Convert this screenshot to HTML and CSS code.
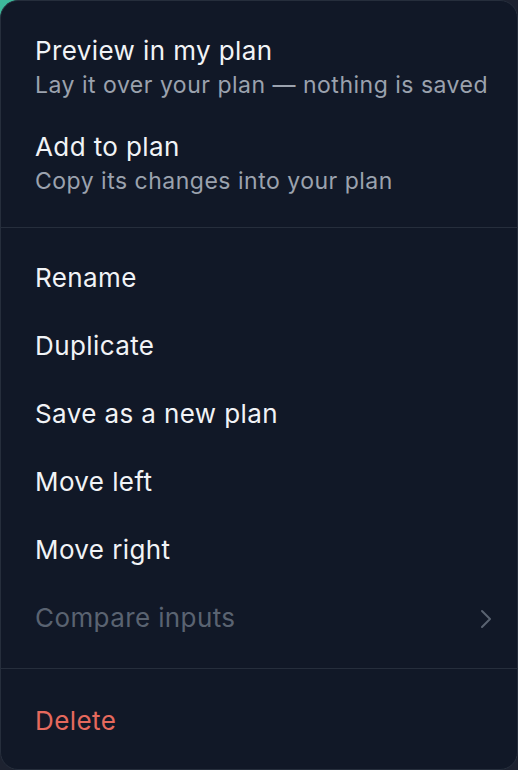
FILE: index.html
```html
<!DOCTYPE html>
<html lang="en">
<head>
<meta charset="utf-8">
<title>Plan menu</title>
<link rel="stylesheet" href="styles.css">
</head>
<body>
<div class="stage">
  <span class="avatar" aria-hidden="true"></span>
  <div class="menu" role="menu">
    <div class="section section-top">
      <div class="item two-line" role="menuitem">
        <div class="title">Preview in my plan</div>
        <div class="sub">Lay it over your plan — nothing is saved</div>
      </div>
      <div class="item two-line" role="menuitem">
        <div class="title">Add to plan</div>
        <div class="sub">Copy its changes into your plan</div>
      </div>
    </div>
    <div class="section">
      <div class="item" role="menuitem"><span class="title">Rename</span></div>
      <div class="item" role="menuitem"><span class="title">Duplicate</span></div>
      <div class="item" role="menuitem"><span class="title">Save as a new plan</span></div>
      <div class="item" role="menuitem"><span class="title">Move left</span></div>
      <div class="item" role="menuitem"><span class="title">Move right</span></div>
      <div class="item disabled" role="menuitem" aria-disabled="true">
        <span class="title">Compare inputs</span>
        <svg class="chev" width="12" height="20" viewBox="0 0 12 20" aria-hidden="true"><path d="M2 2 L10 10 L2 18" fill="none" stroke="currentColor" stroke-width="2" stroke-linecap="round" stroke-linejoin="round"/></svg>
      </div>
    </div>
    <div class="section section-bottom">
      <div class="item danger" role="menuitem"><span class="title">Delete</span></div>
    </div>
  </div>
</div>
</body>
</html>
```
FILE: styles.css
```css
* { box-sizing: border-box; }
html, body { margin: 0; padding: 0; }
body {
  width: 518px;
  height: 770px;
  background: #1d2230;
  font-family: Inter, "Noto Sans", "Liberation Sans", sans-serif;
  overflow: hidden;
}
.stage {
  position: relative;
  width: 518px;
  height: 770px;
}
.avatar {
  position: absolute;
  left: -24px;
  top: -24px;
  width: 52px;
  height: 52px;
  border-radius: 50%;
  background: #3db89b;
}
.menu {
  position: relative;
  height: 770px;
  background: #111827;
  border: 1px solid #262e3c;
  border-radius: 18px;
  display: flex;
  flex-direction: column;
}
.section {
  padding: 16px 0;
  border-top: 1px solid #262e3c;
}
.section-top { border-top: none; padding-bottom: 18px; }
.section-bottom { padding-top: 18px; }
.item {
  display: flex;
  align-items: center;
  justify-content: space-between;
  padding: 14px 25px 14px 34px;
  color: #f1f3f6;
}
.item.two-line {
  flex-direction: column;
  align-items: flex-start;
}
.title {
  font-size: 26px;
  line-height: 40px;
  letter-spacing: 0.4px;
}
.sub {
  font-size: 23px;
  line-height: 28px;
  letter-spacing: 0.5px;
  color: #9ba2ae;
}
.disabled { color: #5a6371; }
.chev { color: #5a6371; margin-top: 2px; }
.danger { color: #e5695d; }
```
